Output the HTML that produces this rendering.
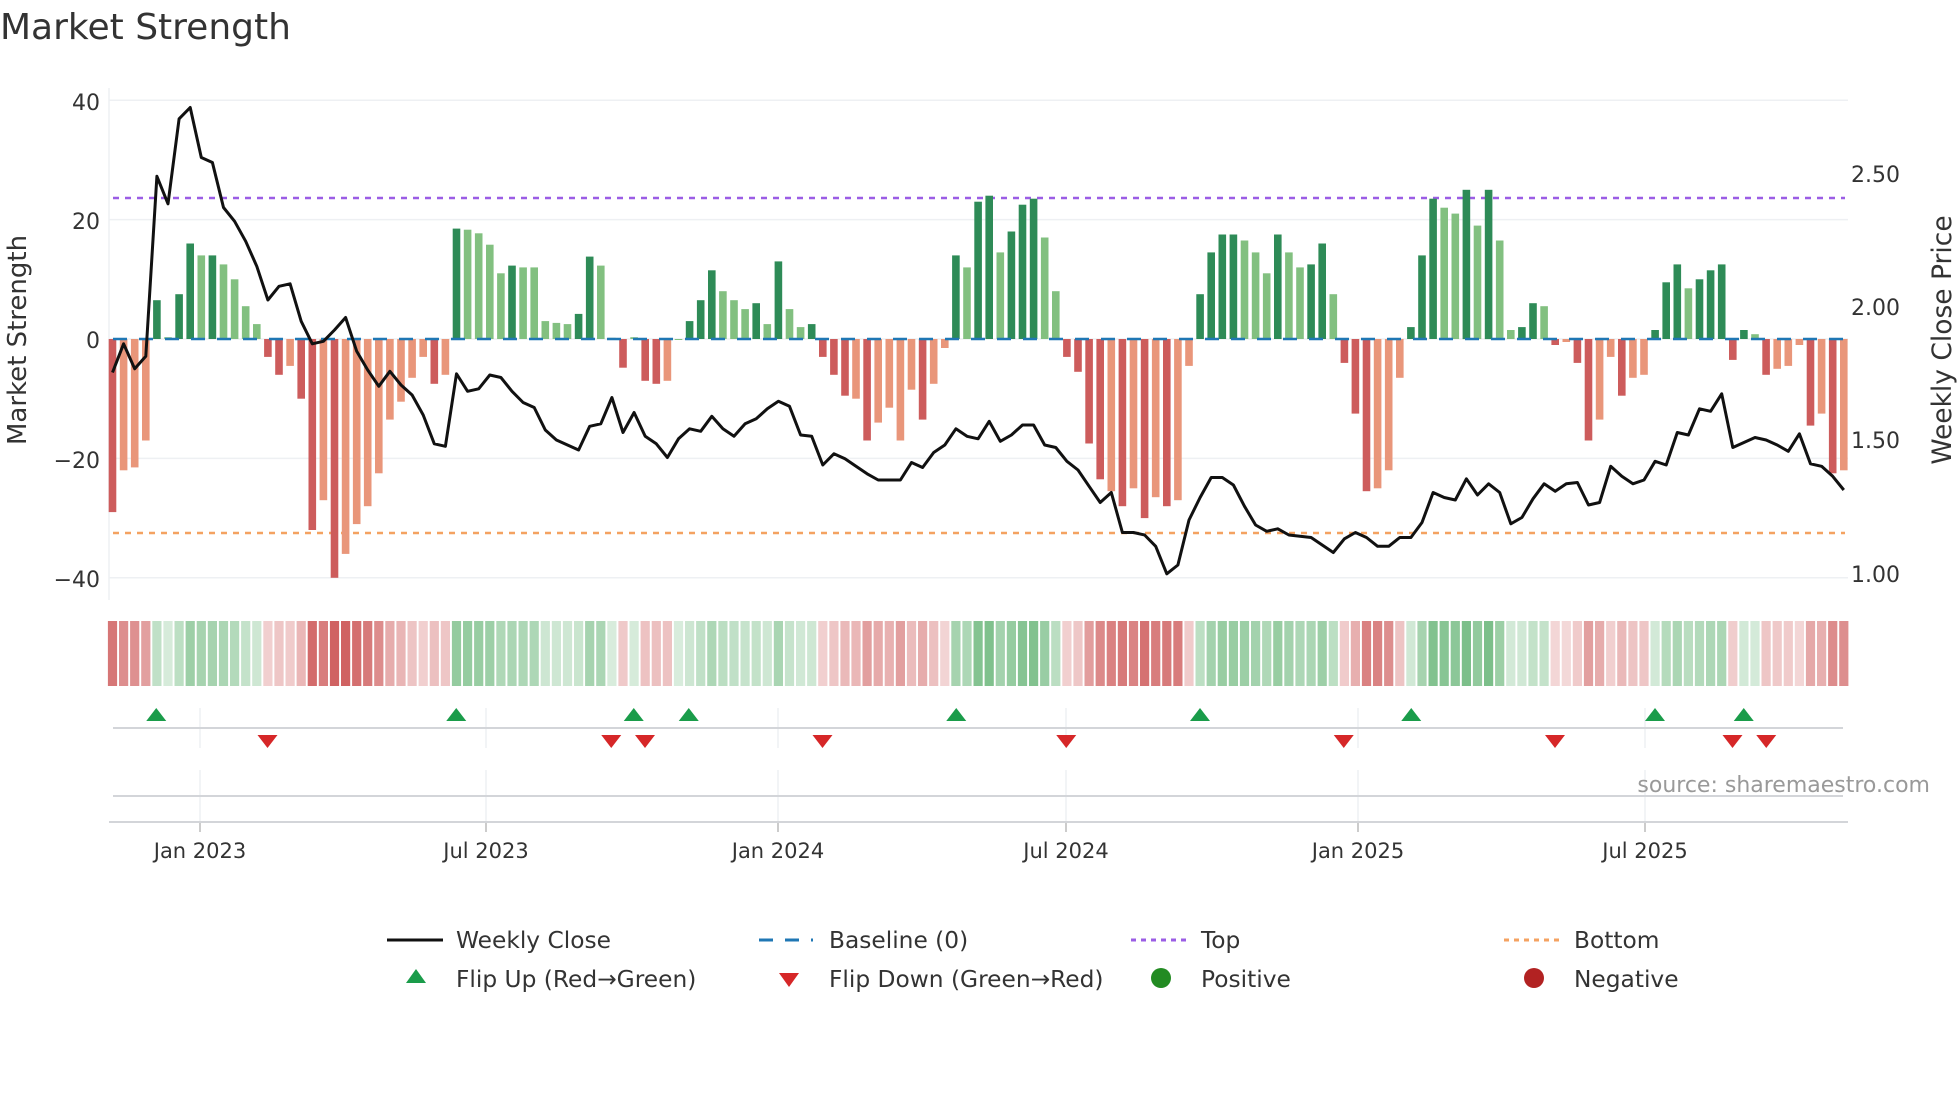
<!DOCTYPE html>
<html><head><meta charset="utf-8">
<style>
html,body{margin:0;padding:0;background:#fff;}
svg{display:block;font-family:"DejaVu Sans","Liberation Sans",sans-serif;}
</style></head>
<body>
<svg id="s" width="1960" height="1102" viewBox="0 0 1960 1102" xmlns="http://www.w3.org/2000/svg">
<text x="0" y="39" font-size="36" fill="#333">Market Strength</text>
<g id="g"></g>
<text transform="translate(26,340) rotate(-90)" text-anchor="middle" font-size="26" fill="#333">Market Strength</text>
<text transform="translate(1951,340) rotate(-90)" text-anchor="middle" font-size="26.5" fill="#333">Weekly Close Price</text>
<g font-size="22" fill="#333" text-anchor="end">
<text x="100" y="110">40</text><text x="100" y="229">20</text><text x="100" y="348">0</text>
<text x="100" y="468">−20</text><text x="100" y="587">−40</text>
</g>
<g font-size="22" fill="#333">
<text x="1851" y="182">2.50</text><text x="1851" y="315">2.00</text>
<text x="1851" y="448">1.50</text><text x="1851" y="582">1.00</text>
</g>
<g font-size="21" fill="#333" text-anchor="middle">
<text x="200" y="858">Jan 2023</text><text x="486" y="858">Jul 2023</text>
<text x="778" y="858">Jan 2024</text><text x="1066" y="858">Jul 2024</text>
<text x="1358" y="858">Jan 2025</text><text x="1645" y="858">Jul 2025</text>
</g>
<text x="1930" y="792" font-size="22" fill="#999" text-anchor="end">source: sharemaestro.com</text>
<g font-size="23.3" fill="#333">
<line x1="387" y1="940" x2="443" y2="940" stroke="#111" stroke-width="3"/>
<text x="456" y="948">Weekly Close</text>
<line x1="759" y1="940" x2="813" y2="940" stroke="#1f77b4" stroke-width="3" stroke-dasharray="14,12"/>
<text x="829" y="948">Baseline (0)</text>
<line x1="1131" y1="940" x2="1187" y2="940" stroke="#9b5de5" stroke-width="3" stroke-dasharray="5,5"/>
<text x="1201" y="948">Top</text>
<line x1="1504" y1="940" x2="1559" y2="940" stroke="#f4a261" stroke-width="3" stroke-dasharray="5,5"/>
<text x="1574" y="948">Bottom</text>
<path d="M416,969 L426,983 L406,983Z" fill="#1a9c4a"/>
<text x="456" y="987">Flip Up (Red→Green)</text>
<path d="M779,973 L799,973 L789,987Z" fill="#d62728"/>
<text x="829" y="987">Flip Down (Green→Red)</text>
<circle cx="1161" cy="978" r="10" fill="#228b22"/>
<text x="1201" y="987">Positive</text>
<circle cx="1534" cy="978" r="10" fill="#b22222"/>
<text x="1574" y="987">Negative</text>
</g>
</svg>
<script>
var S=[-29,-22,-21.5,-17,6.5,0.3,7.5,16,14,14,12.5,10,5.5,2.5,-3,-6,-4.5,-10,-32,-27,-40,-36,-31,-28,-22.5,-13.5,-10.5,-6.5,-3,-7.5,-6,18.5,18.3,17.7,15.8,11,12.3,12,12,3,2.7,2.5,4.2,13.8,12.3,0.2,-4.8,0.3,-7,-7.5,-7,0,3,6.5,11.5,8,6.5,5,6,2.5,13,5,2,2.5,-3,-6,-9.5,-10,-17,-14,-11.5,-17,-8.5,-13.5,-7.5,-1.5,14,12,23,24,14.5,18,22.5,23.5,17,8,-3,-5.5,-17.5,-23.5,-25.5,-28,-25,-30,-26.5,-28,-27,-4.5,7.5,14.5,17.5,17.5,16.5,14.5,11,17.5,14.5,12,12.5,16,7.5,-4,-12.5,-25.5,-25,-22,-6.5,2,14,23.5,22,21,25,19,25,16.5,1.5,2,6,5.5,-1,-0.5,-4,-17,-13.5,-3,-9.5,-6.5,-6,1.5,9.5,12.5,8.5,10,11.5,12.5,-3.5,1.5,0.8,-6,-5,-4.5,-1,-14.5,-12.5,-22.5,-22];
var T="DLLLDLDDLDLLLLDDLDDLDLLLLLLLLDLDLLLLDLLLLLDDLLDLDDLLDDDLLLDLDLLDDDDLDLLLLDLLDLDDLDDDLLDDDDLDLDLDLLDDDDLLLDLLDDLDDDLLLDDDLLDLDLLDDLDLDDLLDLLDDDLDDDDDLDLLLDLDL";
var P=[298,275,295,285,141,163,95,86,126,130,166,177,193,213,240,229,227,257,275,273,264,254,281,296,309,297,308,316,332,355,357,299,313,311,300,302,313,322,326,344,352,356,360,341,339,318,346,330,349,355,366,351,343,345,333,343,349,339,335,327,321,325,348,349,372,363,367,373,379,384,384,384,370,374,362,356,343,349,351,337,353,348,340,340,356,358,369,376,389,402,394,426,426,428,437,459,452,416,398,382,382,388,405,420,425,423,428,429,430,436,442,431,426,430,437,437,430,430,418,394,398,400,383,396,387,394,419,414,399,387,393,387,386,404,402,373,381,387,384,369,372,346,348,327,329,315,358,354,350,352,356,361,347,371,373,381,392];
var o=[];
function X(i){return (90+i*(1475-90)/156)*1.25;}
function Y(v){return 339-v*5.97;}
[40,20,0,-20,-40].forEach(function(v){o.push('<line x1="109" x2="1848" y1="'+Y(v)+'" y2="'+Y(v)+'" stroke="#eef0f3" stroke-width="1.5"/>');});
o.push('<line x1="109" x2="109" y1="88" y2="600" stroke="#eef0f3" stroke-width="1.5"/>');
[200,486,778,1066,1358,1645].forEach(function(x){o.push('<line x1="'+x+'" x2="'+x+'" y1="708" y2="748" stroke="#e6e8ec"/><line x1="'+x+'" x2="'+x+'" y1="770" y2="822" stroke="#e6e8ec"/><line x1="'+x+'" x2="'+x+'" y1="822" y2="832" stroke="#bbb" stroke-width="1.5"/>');});
o.push('<line x1="113" x2="1843" y1="728" y2="728" stroke="#d3d5d9" stroke-width="2"/>');
o.push('<line x1="113" x2="1843" y1="796" y2="796" stroke="#d3d5d9" stroke-width="2"/>');
o.push('<line x1="109" x2="1848" y1="822" y2="822" stroke="#d3d5d9" stroke-width="2"/>');
o.push('<line x1="113" x2="1845" y1="198" y2="198" stroke="#9b5de5" stroke-width="2.5" stroke-dasharray="6,6"/>');
o.push('<line x1="113" x2="1845" y1="533" y2="533" stroke="#f4a261" stroke-width="2.5" stroke-dasharray="6,6"/>');
for(var i=0;i<S.length;i++){var v=S[i],x=X(i)-3.8,c;
 if(v>=0)c=T[i]=="D"?"#2e8b57":"#82c080";else c=T[i]=="D"?"#cd5c5c":"#e9967a";
 var y=v>=0?Y(v):339,h=Math.max(Math.abs(v)*5.97,1);
 o.push('<rect x="'+x.toFixed(1)+'" y="'+y.toFixed(1)+'" width="7.6" height="'+h.toFixed(1)+'" fill="'+c+'"/>');
 var a=Math.min(0.85,0.2+Math.abs(v)/40*0.75);
 var hc=v>=0?'rgba(60,160,80,'+a.toFixed(2)+')':'rgba(200,70,70,'+a.toFixed(2)+')';
 o.push('<rect x="'+(X(i)-4.6).toFixed(1)+'" y="621" width="9.2" height="65" fill="'+hc+'"/>');
}
o.push('<line x1="113" x2="1845" y1="339" y2="339" stroke="#1f77b4" stroke-width="2.5" stroke-dasharray="14,12"/>');
var d='';for(var i=0;i<P.length;i++){d+=(i?'L':'M')+X(i).toFixed(1)+','+(P[i]*1.25).toFixed(1);}
o.push('<path d="'+d+'" fill="none" stroke="#111" stroke-width="3" stroke-linejoin="round"/>');
[125,365,507,551,765,960,1129,1324,1395].forEach(function(p){var x=p*1.25;o.push('<path d="M'+x+',708 L'+(x+10)+',721 L'+(x-10)+',721Z" fill="#1a9c4a"/>');});
[214,489,516,658,853,1075,1244,1386,1413].forEach(function(p){var x=p*1.25;o.push('<path d="M'+(x-10)+',735 L'+(x+10)+',735 L'+x+',748Z" fill="#d62728"/>');});
document.getElementById('g').innerHTML=o.join('');
</script>
</body></html>
